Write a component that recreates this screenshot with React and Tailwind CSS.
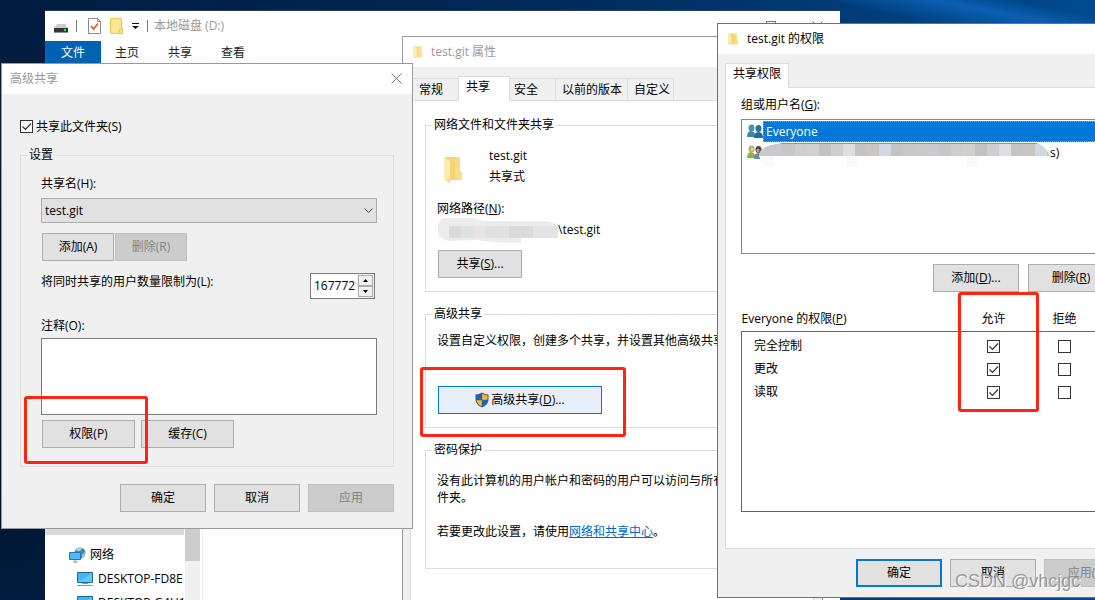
import React from 'react';
import clsx from 'clsx';

const permissionRows = [
  { name: '完全控制', allow: true, deny: false },
  { name: '更改', allow: true, deny: false },
  { name: '读取', allow: true, deny: false },
];

const propertyTabs = [
  { name: '常规', className: 'w-[47px] pl-2' },
  { name: '共享', className: 'w-[52px] pl-[7px]', active: true },
  { name: '安全', className: 'w-[46px] border-r pl-1' },
  { name: '以前的版本', className: 'w-[72px] border-r pl-[6px]' },
  { name: '自定义', className: 'w-[46px] border-r pl-[6px]' },
];

const FolderIcon = ({ className }) => (
  <svg viewBox="0 0 20 28" className={className} preserveAspectRatio="none">
    <path d="M1 1h16v14l2 2v7H1z" fill="#f6d36f" />
    <path d="M12 1h5v14l2 2v7h-7z" fill="#f9dc84" />
    <path d="M1 1l6 4v22l-6-3z" fill="#fdebaf" />
    <path d="M3 24l4 3V22z" fill="#f8d77a" />
  </svg>
);

const CloseIcon = () => (
  <svg viewBox="0 0 11 11" className="h-[11px] w-[11px]" stroke="#777" strokeWidth="1">
    <path d="M.5.5l10 10M10.5.5l-10 10" />
  </svg>
);

const DriveIcon = () => (
  <svg viewBox="0 0 14 9" className="h-[9px] w-[14px]">
    <path d="M3 0h8l3 4H0z" fill="#c9cdd0" />
    <path d="M0 4h14v4H0z" fill="#33373a" />
    <path d="M0 8h14v1H0z" fill="#8b8f92" />
    <rect x="10" y="5" width="2" height="2" fill="#3fe04a" />
  </svg>
);

const DocumentIcon = () => (
  <svg viewBox="0 0 13 16" className="h-4 w-[13px]">
    <path d="M.5.5h9l3 3v12H.5z" fill="#fff" stroke="#8a8a8a" />
    <path d="M9.500.5v3h3" fill="none" stroke="#8a8a8a" />
    <path d="M3 8l2.500 3L10 5.500" fill="none" stroke="#e8551f" strokeWidth="1.600" />
  </svg>
);

const SmallFolderIcon = () => (
  <svg viewBox="0 0 13 16" className="h-4 w-[13px]">
    <path d="M.5.5h11v9l1 1v5H.5z" fill="#ffe694" stroke="#efc94f" />
    <path d="M9.500 15.500v-4l1-1.500h2v5.500z" fill="#ffe07d" stroke="#efc94f" />
  </svg>
);

const MonitorIcon = ({ globe }) => (
  <svg viewBox="0 0 17 16" className="h-4 w-[17px] shrink-0">
    {globe ? (
      <>
        <circle cx="11" cy="6" r="5.500" fill="#4a86aa" />
        <path d="M8 1.500q3-1.500 5 0l-2 2.500-4 0zM13 8l3-3q0 4-3 6z" fill="#a9d3e3" />
        <path d="M.5 5.500h11v7H.5z" fill="#4db9fb" stroke="#2674a8" />
        <path d="M4 15h5M6 13v2" stroke="#8397ab" />
      </>
    ) : (
      <>
        <path d="M.5 1.500h15v10H.5z" fill="#41b4fa" stroke="#1c6ba0" />
        <path d="M1 11L15 2v9z" fill="#66c6ff" />
        <path d="M5 12.500h6M0 14.500h16" stroke="#8397ab" />
      </>
    )}
  </svg>
);

const ShieldIcon = () => (
  <svg viewBox="0 0 14 16" className="h-4 w-[14px]">
    <path d="M7 .5q3 2 6.500 2v5q0 5-6.500 8Q.5 12.500.5 7.500v-5Q4 2.500 7 .5z" fill="#4d5a68" />
    <path d="M6.800 1.800v6H1.500V3.400Q4.500 3.200 6.800 1.800z" fill="#1367c8" />
    <path d="M7.200 1.800v6h5.300V3.400Q9.500 3.200 7.200 1.800z" fill="#ffb92e" />
    <path d="M1.500 8.200h5.300v6.100Q2 12 1.500 8.200z" fill="#ffb92e" />
    <path d="M12.500 8.200H7.200v6.100Q12 12 12.500 8.200z" fill="#1367c8" />
  </svg>
);

const GroupIcon = ({ selected }) => {
  const [left, right, head] = selected ? ['#3a87a8', '#1f68ab', '#2b6f9c'] : ['#8fb04a', '#5b8db5', '#5a4030'];
  return (
    <svg viewBox="0 0 16 15" className="h-[15px] w-4 shrink-0">
      <path d="M0 13q0-6 4-6t4.500 6z" fill={left} />
      <ellipse cx="4.500" cy="4" rx="3" ry="3.500" fill={selected ? '#4591ae' : '#b8a56a'} />
      <path d="M7 14q0-6 4.500-6t4.500 6z" fill={right} />
      <ellipse cx="11.500" cy="4.500" rx="3" ry="3.500" fill={head} />
      {!selected && <ellipse cx="11" cy="5.500" rx="1.500" ry="2" fill="#cf9a78" />}
      {!selected && <ellipse cx="5" cy="4.500" rx="1.500" ry="2" fill="#e2cda6" />}
    </svg>
  );
};

const Button = ({ children, className, primary, ...props }) => (
  <button
    type="button"
    className={clsx(
      'flex h-7 shrink-0 items-center justify-center',
      primary ? 'border-2 border-[#0078d7]' : 'border border-[#adadad]',
      'bg-[#e1e1e1] disabled:border-[#bfbfbf] disabled:bg-[#cccccc] disabled:text-[#838383]',
      className
    )}
    {...props}
  >
    {children}
  </button>
);

const CheckBox = ({ id, checked, label }) => (
  <span className="relative inline-flex h-[13px] w-[13px] align-middle">
    <input
      id={id}
      type="checkbox"
      defaultChecked={checked}
      aria-label={label}
      className="peer h-[13px] w-[13px] appearance-none border border-[#333] bg-white"
    />
    <svg
      viewBox="0 0 13 13"
      className="pointer-events-none absolute inset-0 hidden peer-checked:block"
      fill="none"
      stroke="#333"
      strokeWidth="1.200"
    >
      <path d="M2.500 6.500l3 3 5.500-6" />
    </svg>
  </span>
);

const GroupBox = ({ title, className, bodyClassName, children }) => (
  <fieldset className={clsx('min-w-0 border border-[#dcdcdc]', className)}>
    <legend className="ml-[6px] px-[2px] leading-4">{title}</legend>
    <div className={clsx('flow-root', bodyClassName)}>{children}</div>
  </fieldset>
);

const Highlight = ({ className }) => (
  <div className={clsx('pointer-events-none absolute rounded-[3px] border-3 border-[#ff2414]', className)} />
);

const Explorer = () => (
  <section className="absolute top-[10px] bottom-0 left-[45px] flex w-[795px] flex-col overflow-hidden border-t border-[#24405f] bg-white">
    <header className="flex h-[30px] shrink-0 items-center pl-[9px] text-[#999]">
      <div className="pt-1"><DriveIcon /></div>
      <span className="ml-2 h-3 w-px bg-[#777]" />
      <div className="ml-[11px] flex items-center gap-[9px]">
        <DocumentIcon />
        <SmallFolderIcon />
        <svg viewBox="0 0 7 6" className="h-[6px] w-[7px]">
          <path d="M0 0h7v1H0zM0 3h7L3.500 6z" fill="#111" />
        </svg>
      </div>
      <span className="ml-2 h-3 w-px bg-[#777]" />
      <h1 className="ml-[6px]">本地磁盘 (D:)</h1>
      <div className="ml-auto flex">
        <button type="button" aria-label="最大化" className="flex w-[46px] justify-center">
          <span className="h-[10px] w-[10px] border border-[#777]" />
        </button>
        <button type="button" aria-label="关闭" className="flex w-[46px] justify-center"><CloseIcon /></button>
      </div>
    </header>
    <nav className="flex h-6 shrink-0 items-center text-[#222]">
      <a href="#file" className="flex h-6 w-14 items-center justify-center bg-[#0063b1] text-white">文件</a>
      <a href="#home" className="ml-[14px]">主页</a>
      <a href="#share" className="ml-[29px]">共享</a>
      <a href="#view" className="ml-[29px]">查看</a>
    </nav>
    <div className="flex min-h-0 flex-1">
      <ul className="w-[139px] shrink-0 overflow-hidden pt-[446px] whitespace-nowrap">
        <li className="flex h-6 items-center bg-[#d9d9d9] pl-[34px]">
          <DriveIcon />
          <span className="ml-[7px]">本地磁盘 (D:)</span>
        </li>
        <li className="mt-2 flex h-6 items-center gap-1 pl-6"><MonitorIcon globe />网络</li>
        <li className="flex h-6 items-center gap-1 pl-8"><MonitorIcon />DESKTOP-FD8E</li>
        <li className="flex h-6 items-center gap-1 pl-8"><MonitorIcon />DESKTOP-G4U1</li>
      </ul>
      <div className="ml-px w-[15px] bg-[#f0f0f0]">
        <div className="h-[496px] bg-[#cdcdcd]" />
      </div>
      <main className="ml-[2px] flex-1 border-l border-[#f0f0f0]" />
    </div>
  </section>
);

const PropertiesWindow = () => (
  <section className="absolute top-[36px] left-[402px] w-[421px] border border-[#999] bg-[#f0f0f0]">
    <header className="flex h-[30px] items-center bg-white pl-[10px] text-[#999]">
      <FolderIcon className="h-[13px] w-[10px] opacity-80" />
      <h2 className="ml-2">test.git 属性</h2>
    </header>
    <div className="pt-[9px] pr-2 pb-4 pl-[7px]">
      <div role="tablist" className="flex items-end pl-px">
        {propertyTabs.map(tab => (
          <button
            key={tab.name}
            type="button"
            role="tab"
            aria-selected={Boolean(tab.active)}
            className={clsx(
              'shrink-0 border-t border-[#dcdcdc] text-left whitespace-nowrap',
              tab.active ? 'relative -mb-px h-[25px] border-x bg-white pb-1' : 'h-[22px]',
              tab.className
            )}
          >
            {tab.name}
          </button>
        ))}
      </div>
      <div className="border border-[#dcdcdc] bg-white px-[14px] pt-4 pb-12">
        <GroupBox title="网络文件和文件夹共享" bodyClassName="pb-[13px] pl-[11px]">
          <div className="mt-[15px] flex pl-[6px]">
            <FolderIcon className="mt-2 h-7 w-5" />
            <div className="ml-[26px] flex flex-col gap-[5px] leading-4">
              <span>test.git</span>
              <span>共享式</span>
            </div>
          </div>
          <p className="mt-4 leading-4">网络路径(<u>N</u>):</p>
          <div className="mt-[5px] flex h-4 items-center leading-4">
            <svg viewBox="0 0 121 26" className="h-[26px] w-[121px]">
              <path d="M9 1h26l12 3h60q14 1 14 9v8H84v5q-30 0-45-3L12 24Q1 22 1 14V9q0-8 8-8z" fill="#ececec" />
              <path d="M12 9h12v12H12zM72 9h24v12H72z" fill="#dadada" />
              <path d="M24 9h12v12H24zM48 9h12v12H48z" fill="#dfe2e5" />
              <path d="M36 9h12v12H36z" fill="#e8e4e3" />
              <path d="M60 9h12v12H60z" fill="#e2e2e2" />
              <path d="M96 9h25v12H96z" fill="#e4e4e4" />
            </svg>
            <span>\test.git</span>
          </div>
          <Button className="mt-3 ml-px w-21">共享(<u>S</u>)...</Button>
        </GroupBox>
        <GroupBox title="高级共享" className="mt-[14px]" bodyClassName="pb-[13px] pl-[11px]">
          <p className="mt-[11px] leading-4 whitespace-nowrap">设置自定义权限，创建多个共享，并设置其他高级共享选项。</p>
          <button type="button" className="mt-[37px] ml-px flex h-7 w-41 items-center justify-center gap-[2px] border border-[#0078d7] bg-[#e8effa]">
            <ShieldIcon />
            <span>高级共享(<u>D</u>)...</span>
          </button>
        </GroupBox>
        <GroupBox title="密码保护" className="mt-[14px]" bodyClassName="pb-7 pl-[11px]">
          <p className="mt-[14px] leading-[17px] whitespace-nowrap">
            没有此计算机的用户帐户和密码的用户可以访问与所有人共享的文<br />件夹。
          </p>
          <p className="mt-[18px] leading-4">
            若要更改此设置，请使用<a href="#network" className="text-[#0066cc] underline">网络和共享中心</a>。
          </p>
        </GroupBox>
      </div>
    </div>
  </section>
);

const AdvancedSharingWindow = () => (
  <section className="absolute top-[63px] left-px w-[412px] border border-[#999] bg-[#f0f0f0]">
    <header className="flex h-[30px] items-center justify-between bg-white pr-[10px] pb-px pl-2 text-[#999]">
      <h2>高级共享</h2>
      <button type="button" aria-label="关闭"><CloseIcon /></button>
    </header>
    <div className="px-[18px] pt-6 pb-4">
      <div className="flex h-[17px] items-center gap-[3px]">
        <CheckBox id="share-folder" checked />
        <label htmlFor="share-folder">共享此文件夹(S)</label>
      </div>
      <GroupBox title="设置" className="mt-3" bodyClassName="pr-4 pb-[18px] pl-5">
        <label htmlFor="share-name" className="mt-[13px] block leading-4">共享名(H):</label>
        <div className="relative mt-[6px]">
          <select id="share-name" className="block h-[25px] w-full appearance-none border border-[#adadad] bg-[#e1e1e1] px-[3px]">
            <option>test.git</option>
          </select>
          <svg viewBox="0 0 9 6" className="pointer-events-none absolute top-[10px] right-1 h-[6px] w-[9px]" fill="none" stroke="#444">
            <path d="M.5.5l4 4 4-4" />
          </svg>
        </div>
        <div className="mt-[10px] flex gap-px pl-px">
          <Button className="w-18">添加(A)</Button>
          <Button className="w-18" disabled>删除(R)</Button>
        </div>
        <div className="mt-3 flex items-start justify-between pr-[2px]">
          <label htmlFor="user-limit" className="mt-px leading-4">将同时共享的用户数量限制为(L):</label>
          <div className="flex h-[26px] w-[65px] border border-[#7a7a7a] bg-white">
            <input id="user-limit" type="text" defaultValue="167772" className="min-w-0 flex-1 pl-[3px]" />
            <div className="flex w-[17px] flex-col bg-[#f0f0f0] p-px">
              <button type="button" aria-label="增加" className="flex flex-1 items-center justify-center border border-[#adadad]">
                <svg viewBox="0 0 5 3" className="h-[3px] w-[5px]"><path d="M0 3h5L2.500 0z" /></svg>
              </button>
              <button type="button" aria-label="减少" className="flex flex-1 items-center justify-center border border-[#adadad]">
                <svg viewBox="0 0 5 3" className="h-[3px] w-[5px]"><path d="M0 0h5L2.500 3z" /></svg>
              </button>
            </div>
          </div>
        </div>
        <label htmlFor="comment" className="mt-[19px] block leading-4">注释(O):</label>
        <textarea id="comment" className="mt-1 block h-[77px] w-full resize-none border border-[#7a7a7a] bg-white" />
        <div className="mt-[5px] flex gap-[6px] pl-px">
          <Button className="w-[93px]">权限(P)</Button>
          <Button className="w-[93px]">缓存(C)</Button>
        </div>
      </GroupBox>
      <div className="mt-[17px] flex justify-end gap-2">
        <Button className="w-[86px]">确定</Button>
        <Button className="w-[86px]">取消</Button>
        <Button className="w-[86px]" disabled>应用</Button>
      </div>
    </div>
  </section>
);

const maskColors = ['#c9c9c9', '#cbc8ce', '#c6c6c8', '#cfcdd0', '#d2d0cc', '#c2c2c2', '#cfcfcf', '#dcdee3', '#c4c4c4', '#cac5c0', '#d0d8e1', '#c3c3c3', '#c8c8c8'];

const NameMask = () => (
  <svg viewBox="0 0 292 26" className="h-[26px] w-[292px] shrink-0">
    <clipPath id="mask-shape">
      <path d="M0 13Q0 5 12 2l10-2h256q8 2 13 13z" />
    </clipPath>
    <g clipPath="url(#mask-shape)">
      {Array.from({ length: 25 }, (_, i) => (
        <rect key={i} x={i * 12} y="0" width="12" height="13" fill={maskColors[i % 13]} />
      ))}
      <path d="M22 .5h256" stroke="#5fa3dc" />
    </g>
    <path d="M0 13h15v11H5zM87 13h12v11H87zM207 13h12v11h-12z" fill="#fafafb" />
  </svg>
);

const PermissionsWindow = () => (
  <section className="absolute top-[23px] left-[717px] w-[421px] border border-[#707070] bg-[#f0f0f0]">
    <header className="flex h-[30px] items-center bg-white pl-[10px]">
      <FolderIcon className="h-[13px] w-[10px]" />
      <h2 className="ml-[9px]">test.git 的权限</h2>
    </header>
    <div className="px-[7px] pt-[9px] pb-[10px]">
      <div role="tablist" className="flex">
        <button type="button" role="tab" aria-selected="true" className="relative -mb-px h-[25px] border border-b-0 border-[#dcdcdc] bg-white px-[7px] pb-1">
          共享权限
        </button>
      </div>
      <div className="border border-[#dcdcdc] bg-white px-[15px] pt-[9px] pb-9">
        <p className="leading-4">组或用户名(<u>G</u>):</p>
        <ul className="mt-[6px] h-[135px] border border-[#828790] pt-px pl-[5px]">
          <li className="flex h-[21px] items-center">
            <GroupIcon selected />
            <span className="flex h-[21px] flex-1 items-center border border-dotted border-[#ff8728] bg-[#0078d7] pl-[2px] text-white">Everyone</span>
          </li>
          <li className="flex h-[21px] items-center">
            <GroupIcon />
            <div className="-ml-1 flex h-[21px] items-start pt-px"><NameMask /></div>
            <span className="-ml-px">s)</span>
          </li>
        </ul>
        <div className="mt-[10px] flex justify-end gap-[9px]">
          <Button className="w-[86px]">添加(<u>D</u>)...</Button>
          <Button className="w-[86px]">删除(<u>R</u>)</Button>
        </div>
        <table className="mt-[19px] w-full table-fixed border-collapse">
          <colgroup>
            <col />
            <col className="w-[72px]" />
            <col className="w-[84px]" />
          </colgroup>
          <thead>
            <tr className="h-5 align-top leading-4">
              <th className="p-0 text-left font-normal">Everyone 的权限(<u>P</u>)</th>
              <th className="p-0 text-center font-normal">允许</th>
              <th className="p-0 pr-[14px] text-center font-normal">拒绝</th>
            </tr>
          </thead>
          <tbody className="border border-[#646464]">
            <tr className="h-[3px]"><td colSpan={3} /></tr>
            {permissionRows.map(row => (
              <tr key={row.name} className="h-[23px] leading-4">
                <td className="p-0 pt-px pl-3">{row.name}</td>
                <td className="p-0 text-center"><CheckBox checked={row.allow} label={`允许 ${row.name}`} /></td>
                <td className="p-0 pr-[14px] text-center"><CheckBox checked={row.deny} label={`拒绝 ${row.name}`} /></td>
              </tr>
            ))}
            <tr className="h-[108px]"><td colSpan={3} /></tr>
          </tbody>
        </table>
      </div>
      <div className="mt-[10px] flex justify-end gap-2">
        <Button className="w-[86px]" primary>确定</Button>
        <Button className="w-[86px]">取消</Button>
        <Button className="w-[86px]" disabled>应用(A)</Button>
      </div>
    </div>
  </section>
);

export default function App() {
  return (
    <div className="relative h-screen w-full overflow-hidden bg-[linear-gradient(12deg,transparent_93%,#0a5fb4_96%,transparent_98%),linear-gradient(to_bottom,transparent_20%,rgb(0_8_24/0.4)_80%,transparent_99%),linear-gradient(to_right,#001c3e,#002a58_50%,#004a8f)] font-['Open_Sans','Noto_Sans_CJK_SC',sans-serif] text-xs text-black">
      <Explorer />
      <PropertiesWindow />
      <AdvancedSharingWindow />
      <PermissionsWindow />
      <Highlight className="top-[396px] left-[24px] h-[68px] w-[124px]" />
      <Highlight className="top-[367px] left-[420px] h-[70px] w-[206px]" />
      <Highlight className="top-[292px] left-[958px] h-[120px] w-[81px]" />
      <span className="pointer-events-none absolute top-[567px] left-[955px] font-['Liberation_Sans',sans-serif] text-lg text-[#999] [text-shadow:1px_1px_0_#fff]">
        CSDN @vhcjgc
      </span>
    </div>
  );
}
